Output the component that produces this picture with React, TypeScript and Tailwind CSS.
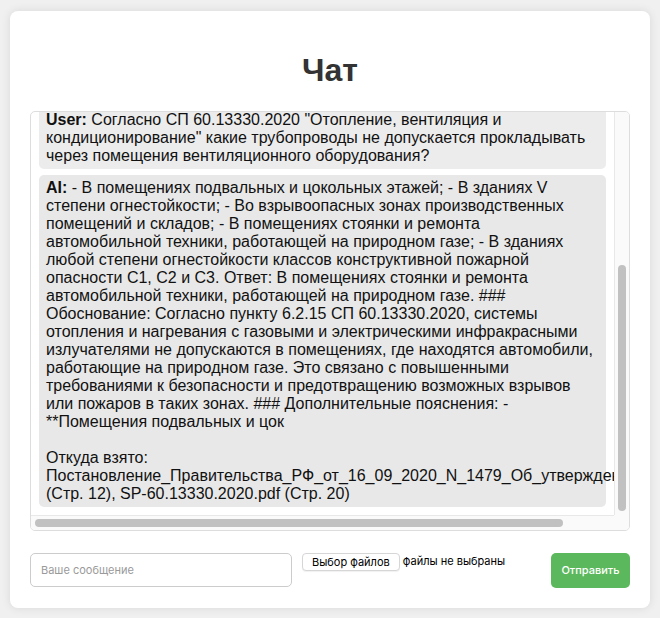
import React, { useEffect, useRef } from 'react';

const MESSAGES = [
  {
    role: 'User',
    text: 'Какие требования предъявляются к прокладке воздуховодов через противопожарные преграды?',
  },
  {
    role: 'AI',
    text: 'Согласно СП 60.13330.2020, транзитные воздуховоды при пересечении противопожарных преград должны иметь предел огнестойкости не менее предела огнестойкости преграды. В местах пересечения следует устанавливать нормально открытые противопожарные клапаны, а зазоры между воздуховодом и конструкцией заделывать негорючими материалами, обеспечивая нормируемый предел огнестойкости. ### Дополнительно: требования к уплотнению и креплению воздуховодов приведены в разделе 7.',
  },
  {
    role: 'User',
    text: 'Согласно СП 60.13330.2020 "Отопление, вентиляция и кондиционирование" какие трубопроводы не допускается прокладывать через помещения вентиляционного оборудования?',
  },
  {
    role: 'AI',
    text: '- В помещениях подвальных и цокольных этажей; - В зданиях V степени огнестойкости; - Во взрывоопасных зонах производственных помещений и складов; - В помещениях стоянки и ремонта автомобильной техники, работающей на природном газе; - В зданиях любой степени огнестойкости классов конструктивной пожарной опасности С1, С2 и С3. Ответ: В помещениях стоянки и ремонта автомобильной техники, работающей на природном газе. ### Обоснование: Согласно пункту 6.2.15 СП 60.13330.2020, системы отопления и нагревания с газовыми и электрическими инфракрасными излучателями не допускаются в помещениях, где находятся автомобили, работающие на природном газе. Это связано с повышенными требованиями к безопасности и предотвращению возможных взрывов или пожаров в таких зонах. ### Дополнительные пояснения: - **Помещения подвальных и цок',
    sources:
      'Постановление_Правительства_РФ_от_16_09_2020_N_1479_Об_утверждении_Правил_противопожарного_режима.pdf (Стр. 12), SP-60.13330.2020.pdf (Стр. 20)',
  },
];

export default function App() {
  const chatRef = useRef<HTMLDivElement>(null);

  // keep the latest message in view
  useEffect(() => {
    const el = chatRef.current;
    if (el) el.scrollTop = el.scrollHeight;
  }, []);

  return (
    <div className="min-h-screen bg-[#f0f0f0] pt-[11px] pb-[10px] font-['Liberation_Sans',Arial,sans-serif]">
      <div className="w-[640px] mx-auto bg-white rounded-lg p-5 shadow-[0_0_10px_rgba(0,0,0,0.1)]">
        <h1 className="text-center text-[32px] leading-[36.8px] font-bold text-[#333] my-[21.4px]">Чат</h1>

        {/* chat window with its (always visible) scrollbars */}
        <div className="h-[420px] border border-[#ddd] rounded-[5px] bg-white flex flex-col overflow-hidden">
          <div className="flex flex-1 min-h-0">
            <div
              ref={chatRef}
              className="flex-1 min-w-0 overflow-hidden p-2 flex flex-col gap-1.5 text-[16px] leading-[18px] text-[#111]"
            >
              {MESSAGES.map((m, i) => (
                <div
                  key={i}
                  className={`shrink-0 rounded-[5px] py-1 px-[7px] ${m.role === 'User' ? 'bg-[#ececec]' : 'bg-[#e8e8e8]'}`}
                >
                  <strong>{m.role}:</strong> {m.text}
                  {m.sources && (
                    <>
                      <br />
                      <br />
                      Откуда взято:
                      <br />
                      {m.sources}
                    </>
                  )}
                </div>
              ))}
            </div>
            <div className="w-[15px] shrink-0 bg-[#fafafa] border-l border-[#e8e8e8] flex flex-col items-center pb-[4px]">
              <div className="mt-auto w-[8px] h-[246px] rounded-full bg-[#c1c1c1]" />
            </div>
          </div>
          <div className="h-[15px] shrink-0 flex">
            <div className="flex-1 bg-[#fafafa] border-t border-[#e8e8e8] flex items-center pl-[4px]">
              <div className="w-[528px] h-[8px] rounded-full bg-[#c1c1c1]" />
            </div>
            <div className="w-[15px] bg-[#fafafa]" />
          </div>
        </div>

        <form className="mt-[22px] flex items-start gap-[10px] font-['Inter',sans-serif]" onSubmit={e => e.preventDefault()}>
          <input
            type="text"
            placeholder="Ваше сообщение"
            className="flex-1 min-w-0 h-[34px] border border-[#ccc] rounded-[5px] px-[10px] text-[11px] text-[#333] placeholder:text-[#9a9a9a] outline-none"
          />
          <label className="w-[239px] flex items-center gap-[3px] text-[11px] text-black cursor-pointer">
            <input type="file" className="hidden" />
            <span className="h-[18px] px-[9px] leading-[16px] border border-[#d6d6d6] rounded-[4px] bg-white shadow-[0_1px_1px_rgba(0,0,0,0.06)]">
              Выбор файлов
            </span>
            <span>файлы не выбраны</span>
          </label>
          <button
            type="submit"
            className="w-[79px] h-[35px] bg-[#5cb85c] text-white text-[11px] font-medium rounded-[5px]"
          >
            Отправить
          </button>
        </form>
      </div>
    </div>
  );
}
